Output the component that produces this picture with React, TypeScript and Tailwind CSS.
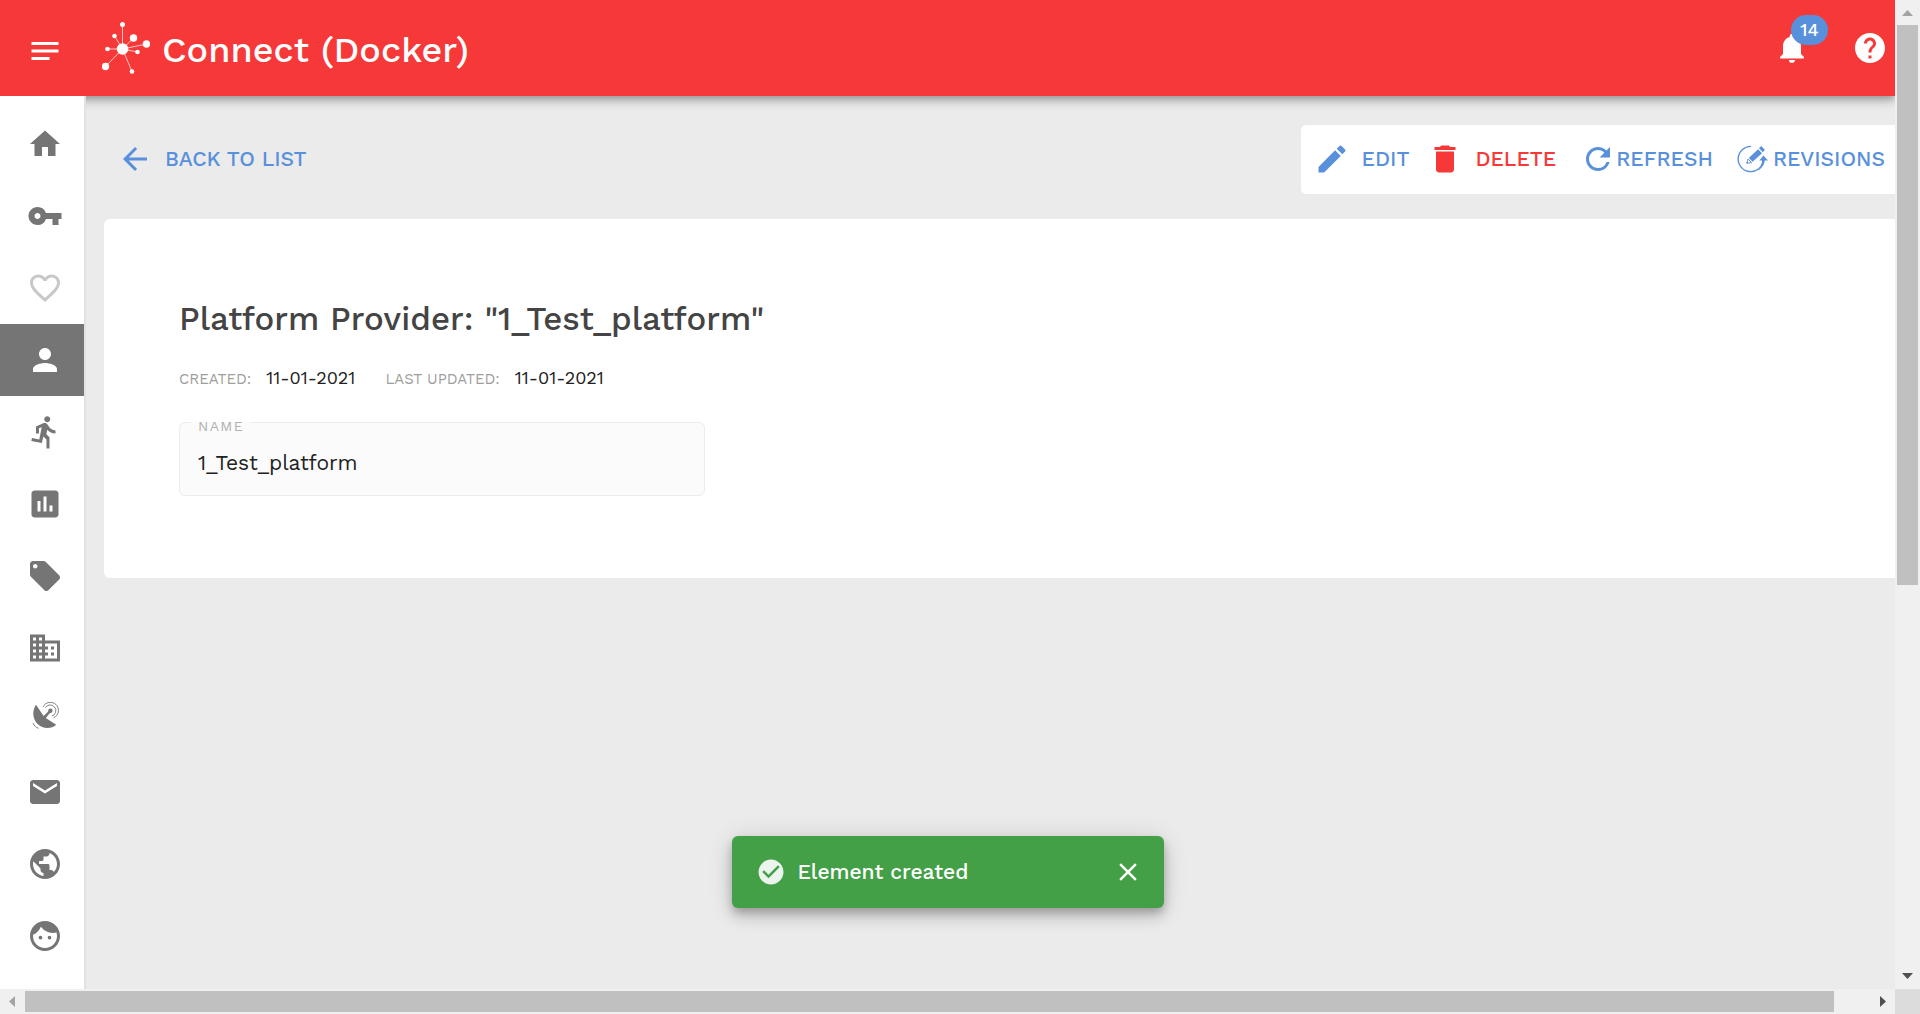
import React from "react";
import type { ReactNode } from "react";
import {
  MdNotes, MdNotifications, MdHelp, MdHome, MdVpnKey, MdFavoriteBorder, MdPerson,
  MdDirectionsRun, MdAssessment, MdLocalOffer, MdBusiness, MdMail, MdPublic, MdFace,
  MdArrowBack, MdEdit, MdDelete, MdRefresh, MdCheckCircle, MdClose,
} from "react-icons/md";

function ConnectLogo() {
  const nodes = [
    [122.5, 24.5, 2.5], [114.5, 36, 2.3], [133.5, 38, 3.7], [146.5, 44, 3.7],
    [107.5, 49, 2.3], [137.5, 52, 2.3], [105.5, 66.5, 3.7], [132, 71.5, 2.3],
  ];
  return (
    <svg className="h-14 w-12 shrink-0" viewBox="102 20 48 56" fill="#fff" aria-hidden="true">
      {nodes.map(([x, y, r]) => (
        <g key={`${x}-${y}`}>
          <path d={`M122.5 49L${x} ${y}`} stroke="#fff" strokeOpacity="0.8" strokeWidth="0.9" />
          <circle cx={x} cy={y} r={r} />
        </g>
      ))}
      <circle cx="122.5" cy="49" r="5.8" />
    </svg>
  );
}

function DishIcon() {
  return (
    <svg className="mb-2 size-7" viewBox="0 0 28 28" fill="currentColor" aria-hidden="true">
      <path d="M5 2.800L12.600 14L18.300 8.500L19.700 9.900L14.800 16L25.200 22.800C20 27.600 11.500 27 6.600 22C1.600 16.800 0.800 9.200 5 2.800Z" />
      <circle cx="19.400" cy="8.700" r="2.200" />
      <g fill="none" stroke="currentColor" strokeWidth="0.9">
        <path d="M14.200 5.800A5.700 5.700 0 1 1 20.800 14.100" />
        <path d="M12 5A8.100 8.100 0 1 1 22.600 15.800" />
        <path d="M2 21C3.200 23.800 5 25.500 7.600 26.300" />
      </g>
    </svg>
  );
}

function RevisionsIcon() {
  return (
    <svg className="size-8" viewBox="0 0 32 32" fill="currentColor" aria-hidden="true">
      <path d="M14 3.400A12.600 12.600 0 1 0 26.200 18" fill="none" stroke="currentColor" strokeWidth="1.400" />
      <path d="M22.300 17.400L26.500 12.600L31 17.400H27.700C27.300 21.500 25 25.300 20.500 27.600C23.500 25 25 21.500 25 17.400Z" />
      <path d="M21 6.200L25 10.200L15.600 18.800L11.800 14.900Z" />
      <path d="M22 5.200L24.200 3L27.800 6.800L25.800 9.200Z" />
      <path d="M11 16L14.700 19.700L9.900 20.200Z" fill="none" stroke="currentColor" strokeWidth="0.900" />
      <path d="M9.500 20.500L9.800 18.400L11.600 20.200Z" />
    </svg>
  );
}

const navItems: { label: string; icon: ReactNode; tone: string }[] = [
  { label: "Home", icon: <MdHome />, tone: "text-[#757575]" },
  { label: "Access", icon: <MdVpnKey />, tone: "text-[#757575]" },
  { label: "Favorites", icon: <MdFavoriteBorder />, tone: "text-[#c8c8c8]" },
  { label: "Providers", icon: <MdPerson />, tone: "bg-[#757575] text-white" },
  { label: "Activity", icon: <MdDirectionsRun />, tone: "text-[#757575]" },
  { label: "Reports", icon: <MdAssessment />, tone: "text-[#757575]" },
  { label: "Tags", icon: <MdLocalOffer />, tone: "text-[#757575]" },
  { label: "Companies", icon: <MdBusiness />, tone: "text-[#757575]" },
  { label: "Signals", icon: <DishIcon />, tone: "text-[#757575]" },
  { label: "Mail", icon: <MdMail />, tone: "text-[#757575]" },
  { label: "World", icon: <MdPublic />, tone: "text-[#757575]" },
  { label: "Profile", icon: <MdFace />, tone: "text-[#757575]" },
];

function Header() {
  return (
    <header className="z-10 flex h-24 shrink-0 items-center bg-[#f73838] pr-[7px] pl-[27px] text-white shadow-[0_3px_6px_-1px_rgba(0,0,0,0.2),0_6px_8px_rgba(0,0,0,0.14),0_2px_15px_rgba(0,0,0,0.12)]">
      <button aria-label="Toggle menu" className="mt-1.5 text-4xl"><MdNotes /></button>
      <a href="#" className="ml-[39px] flex items-center gap-3">
        <ConnectLogo />
        <span className="mt-1 text-[36px] leading-[48px] font-medium">Connect (Docker)</span>
      </a>
      <div className="ml-auto flex items-center gap-[42px]">
        <button aria-label="Notifications, 14 new" className="relative text-4xl">
          <MdNotifications />
          <span className="absolute -top-[15px] left-[17px] flex h-[30px] w-[37px] items-center justify-center rounded-full bg-[#5990dc] text-lg font-medium">14</span>
        </button>
        <button aria-label="Help" className="text-4xl"><MdHelp /></button>
      </div>
    </header>
  );
}

function Sidebar() {
  return (
    <nav aria-label="Main" className="z-20 w-[86px] shrink-0 overflow-hidden border-r-2 border-[#e2e2e2] bg-white pt-3">
      {navItems.map((item) => (
        <a key={item.label} href="#" aria-label={item.label} className={`flex h-[72px] items-center justify-center pl-1.5 text-4xl ${item.tone}`}>
          {item.icon}
        </a>
      ))}
    </nav>
  );
}

function Toolbar() {
  return (
    <div className="flex items-center justify-between text-[21px] font-medium text-[#5990dc]">
      <a href="#" className="flex items-center gap-3 pb-0.5 pl-[13px]">
        <MdArrowBack className="text-4xl" />
        BACK TO LIST
      </a>
      <div className="flex h-[69px] items-center rounded-l-[5px] bg-white pr-2.5 pb-0.5 pl-[13px] whitespace-nowrap">
        <button className="flex items-center gap-3"><MdEdit className="text-4xl" />EDIT</button>
        <button className="ml-[18px] flex items-center gap-3 text-[#f73838]"><MdDelete className="text-4xl" />DELETE</button>
        <button className="ml-6 flex items-center"><MdRefresh className="text-4xl" />REFRESH</button>
        <button className="ml-6 flex items-center gap-1"><RevisionsIcon />REVISIONS</button>
      </div>
    </div>
  );
}

function ProviderCard() {
  return (
    <section className="mt-[25px] rounded-l-[6px] bg-white px-[75px] pt-20 pb-[82px]">
      <h1 className="text-[33px] leading-10 font-medium text-[#444]">Platform Provider: "1_Test_platform"</h1>
      <dl className="mt-[25px] flex items-baseline leading-7">
        <dt className="text-[15px] text-[#9e9e9e]">CREATED:</dt>
        <dd className="ml-[15px] text-lg leading-7 text-[#212121]">11-01-2021</dd>
        <dt className="ml-[30px] text-[15px] text-[#9e9e9e]">LAST UPDATED:</dt>
        <dd className="ml-[15px] text-lg leading-7 text-[#212121]">11-01-2021</dd>
      </dl>
      <div className="relative mt-[29px] flex w-[526px]">
        <label htmlFor="name" className="absolute top-0 left-3 bg-[#fbfbfb] px-[7px] text-sm leading-2 tracking-widest text-[#b0b0b0]">NAME</label>
        <input id="name" readOnly value="1_Test_platform" className="h-[74px] w-full rounded-[6px] border border-[#ececec] bg-[#fbfbfb] px-[18px] pt-1.5 text-[21px] text-[#212121] outline-none" />
      </div>
    </section>
  );
}

function Toast() {
  return (
    <div role="status" className="absolute bottom-[81px] left-1/2 flex h-[72px] w-[432px] -translate-x-1/2 items-center rounded-[6px] bg-[#43a047] pr-[21px] pl-6 text-white shadow-[0_5px_8px_-1px_rgba(0,0,0,0.2),0_9px_15px_rgba(0,0,0,0.14),0_2px_27px_rgba(0,0,0,0.12)]">
      <MdCheckCircle className="text-3xl opacity-90" />
      <span className="ml-3 text-[21px] font-medium">Element created</span>
      <button aria-label="Close" className="ml-auto text-3xl"><MdClose /></button>
    </div>
  );
}

function Arrow({ points, muted }: { points: string; muted?: boolean }) {
  return (
    <svg className="size-[25px] shrink-0" viewBox="0 0 25 25" aria-hidden="true">
      <polygon points={points} fill={muted ? "#a3a3a3" : "#505050"} />
    </svg>
  );
}

export default function App() {
  return (
    <div className="grid h-screen grid-cols-[minmax(0,1fr)_25px] grid-rows-[minmax(0,1fr)_25px] overflow-hidden bg-[#ebebeb] font-['Work_Sans',Inter,sans-serif]">
      <div className="relative flex min-h-0 flex-col overflow-hidden">
        <Header />
        <div className="flex min-h-0 flex-1">
          <Sidebar />
          <main className="min-w-0 flex-1 pt-[29px] pl-[18px]">
            <Toolbar />
            <ProviderCard />
          </main>
        </div>
        <Toast />
      </div>
      <div className="flex flex-col items-center bg-[#f0f0f0]">
        <Arrow points="7,16 18,16 12.5,10" muted />
        <div className="h-[560px] w-[21px] bg-[#c0c0c0]" />
        <div className="mt-auto"><Arrow points="7,9 18,9 12.5,15" /></div>
      </div>
      <div className="flex items-center bg-[#f0f0f0]">
        <Arrow points="15,7 15,18 9,12.5" muted />
        <div className="h-[21px] w-[1809px] bg-[#c0c0c0]" />
        <div className="ml-auto"><Arrow points="10,7 10,18 16,12.5" /></div>
      </div>
      <div className="bg-[#dcdcdc]" />
    </div>
  );
}
